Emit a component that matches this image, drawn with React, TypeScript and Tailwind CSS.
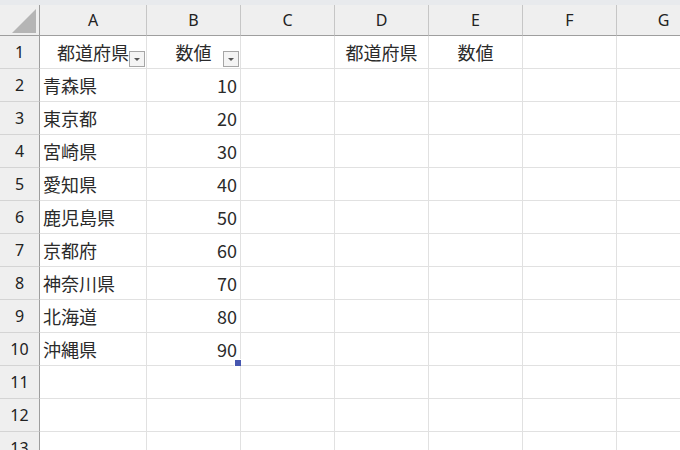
import React from "react";

const cols = ["A", "B", "C", "D", "E", "F", "G"];

const rows: [string, number][] = [
  ["青森県", 10],
  ["東京都", 20],
  ["宮崎県", 30],
  ["愛知県", 40],
  ["鹿児島県", 50],
  ["京都府", 60],
  ["神奈川県", 70],
  ["北海道", 80],
  ["沖縄県", 90],
];

const jp = { fontFamily: '"Noto Sans CJK JP", "Noto Sans", sans-serif' };
const hd = { fontFamily: '"Noto Sans", "Liberation Sans", sans-serif' };

function FilterButton() {
  return (
    <div className="absolute right-[1px] bottom-[1px] w-[16px] h-[16px] border border-[#a6a6a6] bg-[#f4f4f4] flex items-center justify-center">
      <svg width="8" height="5" viewBox="0 0 8 5">
        <path d="M1 1h6L4 4z" fill="#555" />
      </svg>
    </div>
  );
}

function Cell({ children, className = "" }: { children?: React.ReactNode; className?: string }) {
  return (
    <div
      className={`relative h-[33px] border-r border-b border-[#e1e1e1] flex items-center text-[18px] text-[#2b2b2b] leading-none ${className}`}
      style={jp}
    >
      {children}
    </div>
  );
}

function RowHead({ n }: { n: number }) {
  return (
    <div
      className="h-[33px] border-r border-[#9e9e9e] border-b border-b-[#d4d4d4] bg-[#efefef] flex items-center justify-center text-[16px] text-[#222]"
      style={hd}
    >
      {n}
    </div>
  );
}

export default function App() {
  const emptyCols = ["C", "D", "E", "F", "G"];
  return (
    <div className="w-[680px] h-[450px] overflow-hidden bg-white">
      <div className="h-[5px] bg-[#e8eaed]" />
      <div className="grid grid-cols-[40px_107px_94px_94px_94px_94px_94px_94px] w-[710px]">
        {/* header row */}
        <div className="relative h-[31px] bg-[#efefef] border-r border-b border-[#9e9e9e]">
          <svg className="absolute left-[12px] top-[4px]" width="24" height="24" viewBox="0 0 24 24">
            <path d="M24 0V24H0z" fill="#b5b5b5" />
          </svg>
        </div>
        {cols.map((c) => (
          <div
            key={c}
            className="h-[31px] bg-[#efefef] border-r border-r-[#c6c6c6] border-b border-b-[#9e9e9e] flex items-center justify-center text-[16px] text-[#222]"
            style={hd}
          >
            {c}
          </div>
        ))}

        {/* row 1 */}
        <RowHead n={1} />
        <Cell className="justify-center">
          都道府県
          <FilterButton />
        </Cell>
        <Cell className="justify-center">
          数値
          <FilterButton />
        </Cell>
        <Cell />
        <Cell className="justify-center">都道府県</Cell>
        <Cell className="justify-center">数値</Cell>
        <Cell />
        <Cell />

        {rows.map(([pref, val], i) => (
          <React.Fragment key={pref}>
            <RowHead n={i + 2} />
            <Cell className="pl-[3px]">{pref}</Cell>
            <Cell className="justify-end pr-[3px]">
              {val}
              {i === rows.length - 1 && (
                <div className="absolute right-[-1px] bottom-[-1px] w-[7px] h-[7px] bg-[#4656b0] border-l border-t border-white" />
              )}
            </Cell>
            {emptyCols.map((c) => (
              <Cell key={c} />
            ))}
          </React.Fragment>
        ))}

        {[11, 12, 13].map((n) => (
          <React.Fragment key={n}>
            <RowHead n={n} />
            <Cell />
            <Cell />
            {emptyCols.map((c) => (
              <Cell key={c} />
            ))}
          </React.Fragment>
        ))}
      </div>
    </div>
  );
}
